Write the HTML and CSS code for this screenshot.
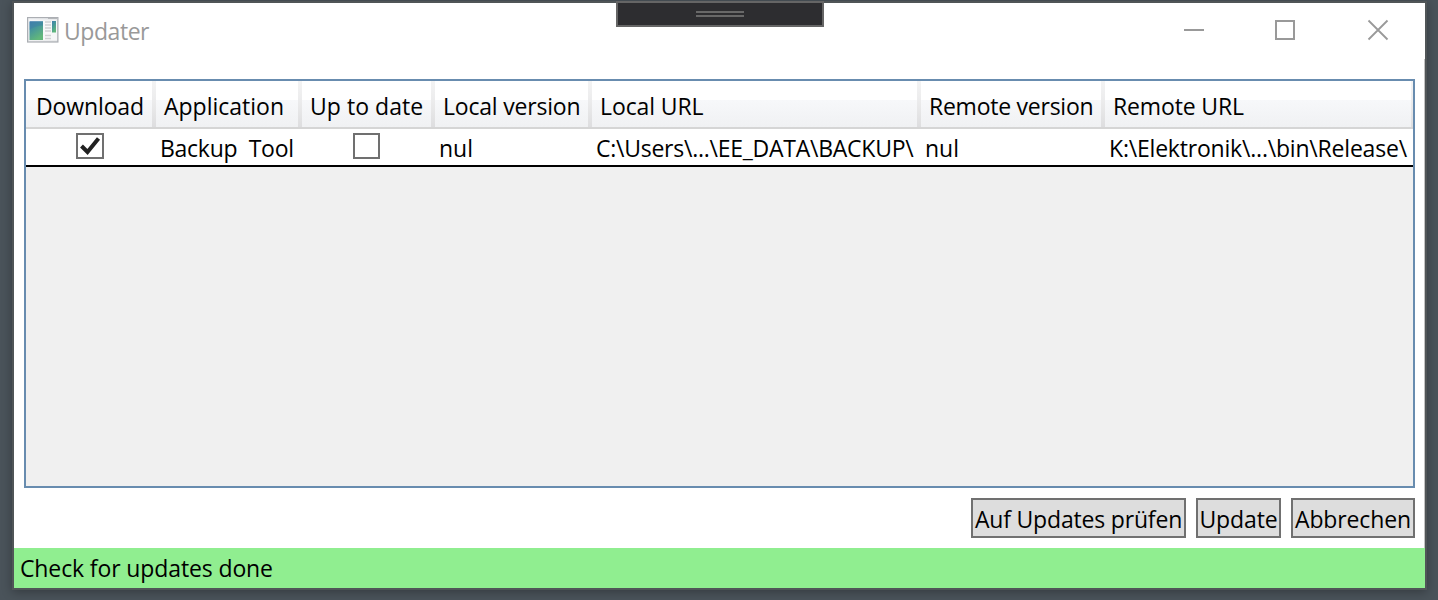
FILE: index.html
```html
<!DOCTYPE html>
<html lang="de">
<head>
<meta charset="utf-8">
<title>Updater</title>
<link rel="stylesheet" href="styles.css">
</head>
<body>
<div class="window">
  <div class="debug-bar"><i></i><i></i></div>
  <header class="titlebar">
    <svg class="app-icon" width="32" height="27" viewBox="0 0 32 27">
      <defs>
        <linearGradient id="frame" x1="0" y1="0" x2="1" y2="1"><stop offset="0" stop-color="#f4f5f7"/><stop offset="1" stop-color="#dcdee0"/></linearGradient>
        <linearGradient id="pane" x1="0" y1="0" x2=".5" y2="1"><stop offset="0" stop-color="#437fae"/><stop offset=".45" stop-color="#47979a"/><stop offset="1" stop-color="#62b87a"/></linearGradient>
      </defs>
      <rect x=".6" y=".6" width="30.3" height="24.4" fill="url(#frame)" stroke="#abaeb3" stroke-width="1.200"/>
      <path d="M21 1.500h9" stroke="#b4b7ba"/>
      <rect x="2" y="3.500" width="28" height="20" fill="#fbfbfb" opacity=".8"/>
      <path d="M3 16C6 11 11 9 16 9V4.500H3z" fill="#3977ac"/>
      <rect x="2.500" y="4.500" width="13.500" height="18.500" fill="url(#pane)"/>
      <path d="M2.500 13C6 10 11 8.500 16 8.500v-4H2.500z" fill="#3977ac" opacity=".35"/>
      <path d="M18 5h6M18 8h6M18 11h6M18 14h6M18 18.500h6M18 21.500h6" stroke="#cfd1d3" stroke-width="1.300"/>
      <rect x="25" y="4" width="4" height="11.500" fill="url(#pane)"/>
    </svg>
    <span class="title">Updater</span>
    <svg class="controls" width="206" height="22" viewBox="0 0 206 22" fill="none" stroke="#999" stroke-width="2">
      <path d="M1 11h20"/>
      <rect x="93" y="2" width="18" height="18"/>
      <path d="M185.500 1.500l19 19M204.500 1.500l-19 19" stroke-width="1.800"/>
    </svg>
  </header>
  <main class="content">
    <div class="grid">
      <div class="row head">
        <div class="th download">Download</div>
        <div class="th application">Application</div>
        <div class="th current">Up to date</div>
        <div class="th local-version">Local version</div>
        <div class="th local-url">Local URL</div>
        <div class="th remote-version">Remote version</div>
        <div class="th remote-url">Remote URL</div>
      </div>
      <div class="row item">
        <div class="td check">
          <svg width="28" height="26" viewBox="0 0 28 26"><rect x="1" y="1" width="26" height="24" fill="#fff" stroke="#707070" stroke-width="2"/><path d="M5.500 13l6 6L22.500 5.500" fill="none" stroke="#212121" stroke-width="4"/></svg>
        </div>
        <div class="td name">Backup&nbsp; Tool</div>
        <div class="td check current-check">
          <svg width="27" height="26" viewBox="0 0 27 26"><rect x="1" y="1" width="25" height="24" fill="#fff" stroke="#707070" stroke-width="2"/></svg>
        </div>
        <div class="td">nul</div>
        <div class="td local-path">C:\Users\...\EE_DATA\BACKUP\</div>
        <div class="td">nul</div>
        <div class="td remote-path">K:\Elektronik\...\bin\Release\</div>
      </div>
    </div>
    <div class="actions">
      <button class="btn search">Auf Updates prüfen</button>
      <button class="btn update">Update</button>
      <button class="btn cancel">Abbrechen</button>
    </div>
  </main>
  <footer class="status">Check for updates done</footer>
</div>
</body>
</html>
```
FILE: styles.css
```css
* { box-sizing: border-box; }
body {
  margin: 0;
  height: 600px;
  padding: 1px 11px 10px 12px;
  overflow: hidden;
  background: #4a535a;
  font: 23px/30px "Open Sans", "Noto Sans", sans-serif;
  color: #000;
}
.window {
  position: relative;
  height: 589px;
  border: 2px solid #505557;
  background: #fff;
  box-shadow: 0 2px 10px rgba(0, 0, 0, .3);
  display: flex;
  flex-direction: column;
}
.debug-bar {
  position: absolute;
  left: 602px;
  top: -2px;
  width: 208px;
  height: 26px;
  border: 2px solid #656565;
  background: #2d2d30;
  display: flex;
  flex-direction: column;
  align-items: center;
  gap: 2px;
  padding-top: 8px;
}
.debug-bar i { width: 48px; height: 2px; background: #686868; }
.titlebar {
  height: 56px;
  padding: 13px 36px 0 13px;
  display: flex;
  align-items: flex-start;
}
.app-icon { margin-top: 1px; }
.title { margin-left: 5px; color: #999; letter-spacing: -.45px; }
.controls { margin: 3px 0 0 auto; }
.content {
  flex: 1;
  border-right: 1px solid #c3c3c3;
  padding: 20px 9px 0 10px;
}
.grid { height: 409px; border: 2px solid #688caf; background: #f0f0f0; }
.row {
  display: grid;
  grid-template-columns: 130px 146px 133px 157px 329px 184px 308px;
  white-space: nowrap;
}
.head {
  height: 48px;
  border-bottom: 2px solid #d5d5d5;
  background: linear-gradient(#fff 0 19px, #f7f8fa 19px, #f0f1f3);
}
.th {
  padding: 10px 0 0 8px;
  border-right: 4px solid;
  border-image: linear-gradient(#f4f4f4, #ececed 19px, #dddddf) 1;
}
.th.download { padding-left: 10px; letter-spacing: -.12px; }
.th.application { letter-spacing: 0; }
.th.current { letter-spacing: .05px; }
.th.local-version { letter-spacing: -.2px; }
.th.local-url { letter-spacing: -.1px; }
.th.remote-version { letter-spacing: -.25px; }
.th.remote-url { border-right-width: 2px; letter-spacing: -.15px; }
.item { height: 38px; background: #fff; border-bottom: 2px solid #000; }
.td { padding: 4px 0 0 4px; }
.td.name { letter-spacing: -.27px; }
.td.check { padding: 4px 2px 0 0; text-align: center; }
.td.current-check { padding-right: 4px; }
.check svg { display: block; margin: 0 auto; }
.local-path { letter-spacing: -.25px; }
.remote-path { padding-left: 4px; letter-spacing: -.2px; }
.actions { display: flex; justify-content: flex-end; gap: 10px; margin-top: 10px; }
.btn {
  height: 40px;
  padding: 2px 0 0;
  border: 2px solid #707070;
  background: #ddd;
  font: inherit;
  color: #000;
  white-space: nowrap;
}
.search { width: 215px; letter-spacing: -.18px; }
.update { width: 85px; letter-spacing: -.1px; }
.cancel { width: 124px; letter-spacing: -.12px; }
.status { height: 40px; padding: 5px 6px; background: #90ee90; letter-spacing: -.12px; }
```
